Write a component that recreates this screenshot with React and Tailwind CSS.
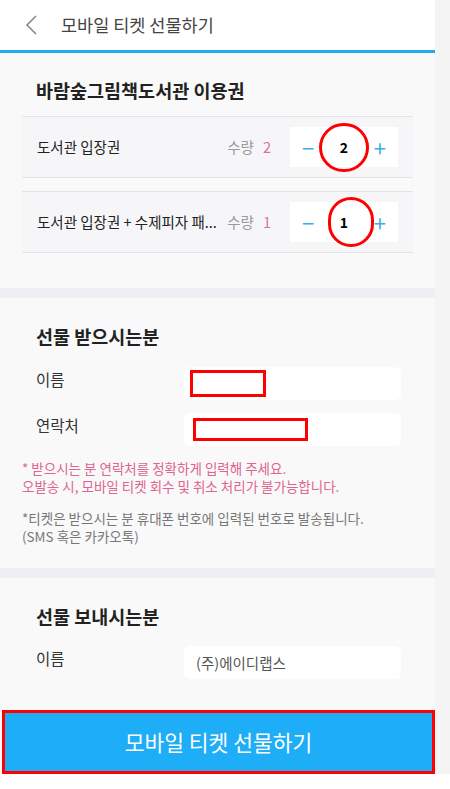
import React from "react";

const font = { fontFamily: '"Noto Sans CJK KR", "Noto Sans", sans-serif' };

const Stepper = ({ count, circle }) => (
  <div className="relative shrink-0 w-[108px] h-[40px] bg-white flex items-center justify-between px-[12px]">
    <span className="text-[#3aaee8] text-[22px] leading-none">−</span>
    <span className="text-[14px] font-bold text-black">{count}</span>
    <span className="text-[#3aaee8] text-[22px] leading-none">+</span>
    {/* annotation circle */}
    <span className={circle} />
  </div>
);

const TicketRow = ({ label, count, circle }) => (
  <div className="h-[62px] mx-[22px] flex items-center border-y border-[#e4e4e6] bg-[#f6f6f8] pl-[15px] pr-[15px]">
    <p className="flex-1 min-w-0 text-[14.5px] text-[#222] whitespace-nowrap">{label}</p>
    <div className="shrink-0 flex items-center gap-[9px] mr-[19px] text-[14.5px] whitespace-nowrap">
      <span className="text-[#9a9a9a]">수량</span>
      <span className="text-[#d9729c]">{count}</span>
    </div>
    <Stepper count={count} circle={circle} />
  </div>
);

const Field = ({ label, children }) => (
  <div className="flex items-center h-[33px] pl-[36px] pr-[34px]">
    <span className="w-[148px] text-[15.5px] text-[#333] -mt-[8px]">{label}</span>
    <div className="relative flex-1 h-[33px] bg-white rounded-[6px] flex items-center pl-[12px] text-[14.5px] text-[#555]">
      {children}
    </div>
  </div>
);

export default function App() {
  return (
    <div className="w-[450px] h-[789px] bg-white flex flex-col" style={font}>
      <div className="flex h-[774px]">
        <div className="w-[435px] flex flex-col bg-[#f9f9f9]">
          {/* HEADER */}
          <div className="h-[50px] bg-white flex items-center">
            <svg className="ml-[24px]" width="14" height="22" viewBox="0 0 14 22">
              <path d="M12 2 L3 11 L12 20" fill="none" stroke="#888" strokeWidth="1.6" />
            </svg>
            <h1 className="ml-[23px] text-[17.5px] text-[#444]">모바일 티켓 선물하기</h1>
          </div>
          <div className="h-[3px] bg-[#27a9ef]" />

          {/* TICKETS */}
          <div className="pt-[23px] pb-[35px]">
            <h2 className="pl-[36px] text-[18.5px] font-bold text-[#222] leading-[28px] mb-[12px]">바람숲그림책도서관 이용권</h2>
            <TicketRow
              label="도서관 입장권"
              count={2}
              circle="absolute left-[29px] top-[-4px] w-[50px] h-[49px] rounded-full border-[3px] border-[#f00]"
            />
            <div className="h-[13px]" />
            <TicketRow
              label="도서관 입장권 + 수제피자 패..."
              count={1}
              circle="absolute left-[38px] top-[-5px] w-[46px] h-[50px] rounded-full border-[3px] border-[#f00]"
            />
          </div>
          <div className="h-[10px] bg-[#f0f0f4]" />

          {/* RECEIVER */}
          <div className="pt-[24px] pb-[23px]">
            <h2 className="pl-[36px] text-[18.5px] font-bold text-[#222] leading-[28px] mb-[17px]">선물 받으시는분</h2>
            <div className="flex flex-col gap-[13px]">
              <Field label="이름">
                <span className="absolute left-[6px] top-[3px] w-[76px] h-[27px] border-[3px] border-[#f00]" />
              </Field>
              <Field label="연락처">
                <span className="absolute left-[9px] top-[5px] w-[115px] h-[23px] border-[3px] border-[#f00]" />
              </Field>
            </div>
            <div className="mt-[13px] pl-[22px] text-[13.5px] leading-[18px] text-[#e0648f]">
              <p>* 받으시는 분 연락처를 정확하게 입력해 주세요.</p>
              <p>오발송 시, 모바일 티켓 회수 및 취소 처리가 불가능합니다.</p>
            </div>
            <div className="mt-[14px] pl-[22px] text-[13.5px] leading-[18px] text-[#777]">
              <p>*티켓은 받으시는 분 휴대폰 번호에 입력된 번호로 발송됩니다.</p>
              <p>(SMS 혹은 카카오톡)</p>
            </div>
          </div>
          <div className="h-[10px] bg-[#f0f0f4]" />

          {/* SENDER */}
          <div className="pt-[24px] flex-1">
            <h2 className="pl-[36px] text-[18.5px] font-bold text-[#222] leading-[28px] mb-[16px]">선물 보내시는분</h2>
            <Field label="이름">(주)에이디랩스</Field>
          </div>

          {/* SUBMIT */}
          <div className="pl-[2px]">
            <button className="w-[433px] h-[64px] bg-[#1eadf7] border-[3px] border-[#f00] text-white text-[21.5px]">
              모바일 티켓 선물하기
            </button>
          </div>
        </div>
        <div className="flex-1 bg-[#f4f4f4]" />
      </div>
      <div className="flex-1 bg-white" />
    </div>
  );
}
